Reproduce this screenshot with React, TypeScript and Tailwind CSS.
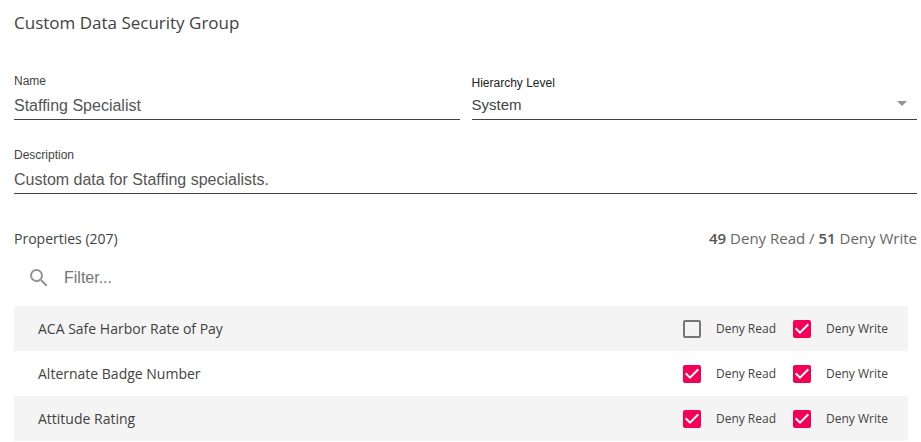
import { useState } from 'react';
import type { ReactNode } from 'react';

type Property = {
    id: string;
    name: string;
    denyRead: boolean;
    denyWrite: boolean;
};

const initialProperties: Property[] = [
    { id: 'safe-harbor', name: 'ACA Safe Harbor Rate of Pay', denyRead: false, denyWrite: true },
    { id: 'badge-number', name: 'Alternate Badge Number', denyRead: true, denyWrite: true },
    { id: 'attitude', name: 'Attitude Rating', denyRead: true, denyWrite: true },
];

type CheckboxProps = {
    checked: boolean;
    onChange: () => void;
    children: ReactNode;
};

const Checkbox = ({ checked, onChange, children }: CheckboxProps) => (
    <label className="flex cursor-pointer items-center gap-[15px] text-xs text-[#424242]">
        <span className="relative block size-[18px]">
            <input
                type="checkbox"
                checked={checked}
                onChange={onChange}
                className="block size-[18px] appearance-none rounded-xs border-2 border-[#757575] checked:border-[#f50057] checked:bg-[#f50057]"
            />
            {checked && (
                <svg className="pointer-events-none absolute inset-0 size-[18px]" viewBox="3 3 18 18" fill="#ffffff">
                    <path d="M10 17l-5-5 1.41-1.41L10 14.17l7.59-7.59L19 8l-9 9z" />
                </svg>
            )}
        </span>
        {children}
    </label>
);

const App = () => {
    const [name, setName] = useState('Staffing Specialist');
    const [description, setDescription] = useState('Custom data for Staffing specialists.');
    const [filter, setFilter] = useState('');
    const [properties, setProperties] = useState(initialProperties);

    const toggle = (id: string, key: 'denyRead' | 'denyWrite') => {
        setProperties(properties.map((p) => (p.id === id ? { ...p, [key]: !p[key] } : p)));
    };

    const visible = properties.filter((p) => p.name.toLowerCase().includes(filter.toLowerCase()));

    return (
        <main className="bg-white pt-[11px] pr-1 pl-[14px] font-['Open_Sans',sans-serif] text-[#424242]">
            <h1 className="text-[17px] leading-6">Custom Data Security Group</h1>

            {/* FIELDS */}
            <div className="mt-[38px] grid grid-cols-2 items-end gap-x-3 gap-y-[27px] font-['Liberation_Sans',sans-serif]">
                <div className="flex flex-col gap-[5px] border-b border-[#424242] pb-px">
                    <label htmlFor="name" className="text-xs leading-4">Name</label>
                    <input
                        id="name"
                        value={name}
                        onChange={(e) => setName(e.target.value)}
                        className="h-6 w-full text-base text-[#555555] outline-none"
                    />
                </div>

                <div className="flex flex-col border-b border-[#424242] pb-[2px]">
                    <label htmlFor="level" className="text-xs leading-4 text-[#212121]">Hierarchy Level</label>
                    <div className="relative">
                        <select id="level" className="block h-[26px] w-full appearance-none pt-[2px] text-[15px] text-[#424242] outline-none">
                            <option>System</option>
                        </select>
                        <svg className="pointer-events-none absolute top-[10px] right-[10px] h-[5px] w-[10px]" viewBox="0 0 10 5" fill="#949494">
                            <path d="M0 0h10L5 5z" />
                        </svg>
                    </div>
                </div>

                <div className="col-span-2 flex flex-col gap-[5px] border-b border-[#424242] pb-px">
                    <label htmlFor="description" className="text-xs leading-4">Description</label>
                    <input
                        id="description"
                        value={description}
                        onChange={(e) => setDescription(e.target.value)}
                        className="h-6 w-full text-base text-[#555555] outline-none"
                    />
                </div>
            </div>

            {/* PROPERTIES */}
            <div className="mt-8 flex h-6 items-baseline justify-between">
                <h2 className="text-sm leading-6">Properties (207)</h2>
                <p className="text-[15px] leading-6 text-[#666666]">
                    <b className="font-semibold text-[#555555]">49</b> Deny Read / <b className="font-semibold text-[#555555]">51</b> Deny Write
                </p>
            </div>

            <label className="flex h-14 items-center gap-4 pl-4">
                <svg className="size-[18px]" viewBox="3 3 18 18" fill="#949494" aria-label="Filter properties">
                    <path d="M15.5 14h-.79l-.28-.27A6.47 6.47 0 0 0 16 9.5 6.5 6.5 0 1 0 9.5 16c1.61 0 3.09-.59 4.23-1.57l.27.28v.79l5 4.99L20.49 19l-4.99-5zm-6 0C7.01 14 5 11.99 5 9.5S7.01 5 9.5 5 14 7.01 14 9.5 11.99 14 9.5 14z" />
                </svg>
                <input
                    value={filter}
                    onChange={(e) => setFilter(e.target.value)}
                    placeholder="Filter..."
                    className="h-6 flex-1 font-['Liberation_Sans',sans-serif] text-base outline-none placeholder:text-[#757575]"
                />
            </label>

            <ul className="mr-[9px]">
                {visible.map((p) => (
                    <li key={p.id} className="flex h-[45px] items-center gap-[17px] pr-5 pl-6 odd:bg-[#f4f4f4]">
                        <span className="flex-1 text-sm">{p.name}</span>
                        <Checkbox checked={p.denyRead} onChange={() => toggle(p.id, 'denyRead')}>Deny Read</Checkbox>
                        <Checkbox checked={p.denyWrite} onChange={() => toggle(p.id, 'denyWrite')}>Deny Write</Checkbox>
                    </li>
                ))}
            </ul>
        </main>
    );
};

export default App;
